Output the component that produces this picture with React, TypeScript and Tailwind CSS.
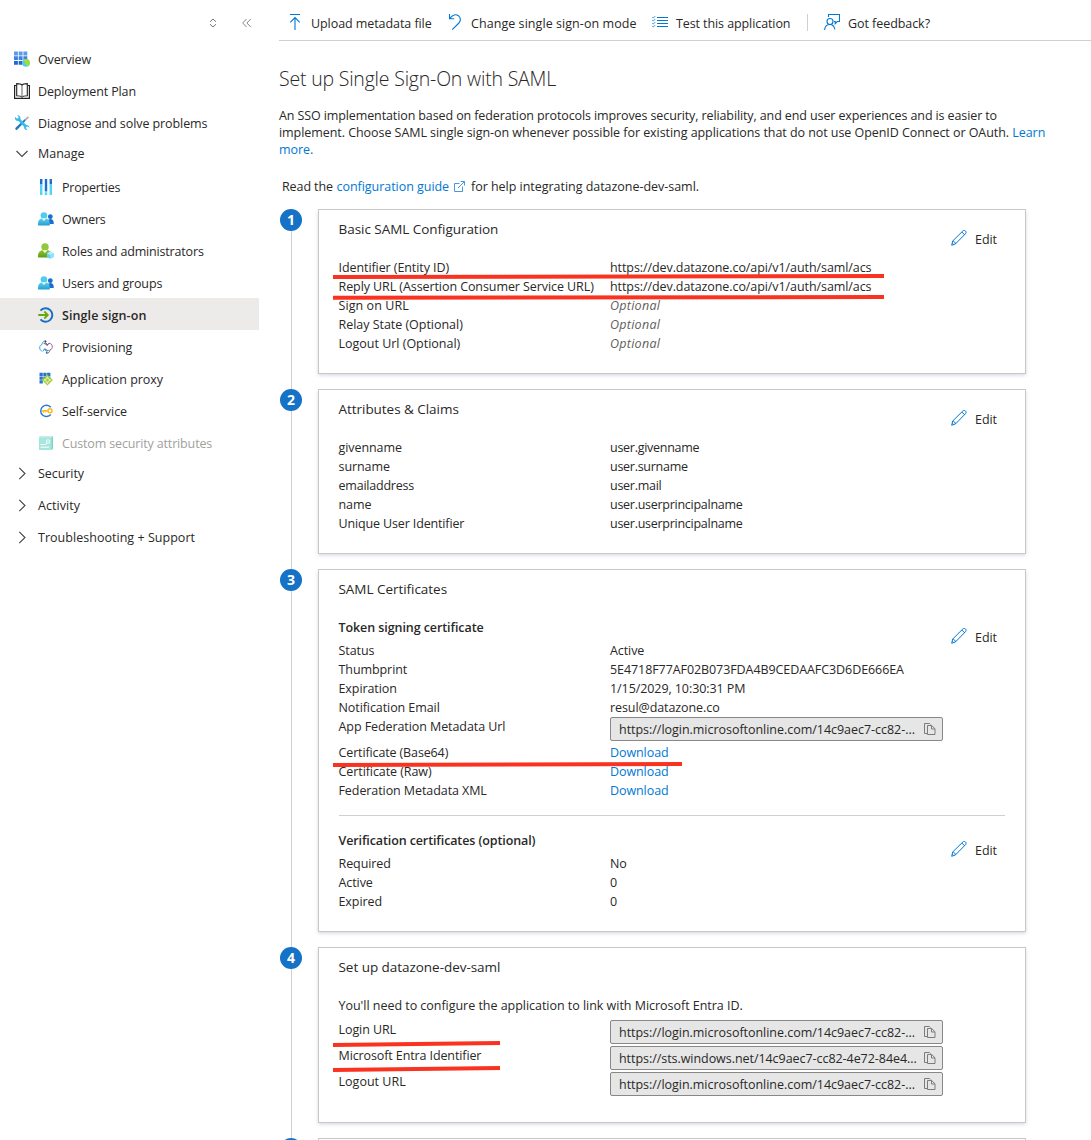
import React, { type ReactNode } from "react";

const BLUE = "#0078d4";

/* ---------- sidebar icons ---------- */

const OverviewIcon = () => (
  <svg width="16" height="16" viewBox="0 0 16 16">
    <defs>
      <linearGradient id="ov" x1="0" y1="0" x2="0" y2="1">
        <stop offset="0" stopColor="#6ba3f2" />
        <stop offset="1" stopColor="#1b5fc9" />
      </linearGradient>
    </defs>
    <g fill="url(#ov)">
      <path d="M0 .5h3.9v3.9H0zM4.7.5h3.9v3.9H4.7zM9.4.5h3.9v3.9H9.4z" fill="#5d99ee" />
      <path d="M0 5.2h3.9v3.9H0zM4.7 5.2h3.9v3.9H4.7zM9.4 5.2h3.9v3.9H9.4z" fill="#3b80e2" />
      <path d="M0 9.9h3.9v3.9H0zM4.7 9.9h3.9v3.9H4.7z" fill="#2468cf" />
    </g>
    <circle cx="12" cy="11.8" r="3.9" fill="#4fcdf0" />
    <path d="M9.2 8.8c2-1.6 6-.8 6.6 2.4.1 2.200-.8 3.600-2.300 4.200-1-.8-.6-1.700-1.500-2.300-1.200-.3-1.300-1.200-.9-2-.8-.6-1.500-1.200-1.900-2.300z" fill="#a6dc2f" />
  </svg>
);

const BookIcon = () => (
  <svg width="16" height="16" viewBox="0 0 16 16" fill="none" stroke="#222">
    <path d="M2.500 2.500H.6v12.800h5.900c.8 0 1 .3 1.500.3s.7-.3 1.500-.3h5.900V2.500h-1.900" strokeWidth="1.200" />
    <path d="M8 2.200C7.300 1 5.500.6 2.700.6v12.200c2.800 0 4.600.3 5.300 1.500.7-1.200 2.500-1.500 5.300-1.500V.6C10.500.6 8.700 1 8 2.200z" strokeWidth="1.100" />
    <path d="M8 2.200v12" stroke="#888" strokeWidth="1.300" />
  </svg>
);

const ToolsIcon = () => (
  <svg width="16" height="16" viewBox="0 0 16 16">
    <path d="M1.600 12.700 10.800 4l1.300 1.300-8.700 9.300c-1.300 1-2.800-.6-1.800-1.900z" fill="#1e78b8" />
    <path d="m10 4.700 3.800-3.400 1.200 1.100-3.500 3.700z" fill="#a4b3bd" />
    <path d="M1 3.800c-.3-1 0-1.500.1-1.900l1.800 1.700 1.400-.3.3-1.500L3 .3C4.900-.1 6.700 1.200 6.400 3.400l-.1.600 6 6c1.700-.4 3.300.9 3.100 2.700l-1.600-1.300-1.500.4-.3 1.500 1.500 1.500c-2 .5-3.700-.9-3.400-3L4.400 6C2.800 6.200 1.500 5.300 1 3.800z" fill="#35bde8" />
  </svg>
);

const ChevronDown = () => (
  <svg width="14" height="14" viewBox="0 0 14 14" fill="none" stroke="#444" strokeWidth="1.100">
    <path d="m1.500 4 5.500 5.500L12.500 4" />
  </svg>
);
const ChevronRight = () => (
  <svg width="14" height="14" viewBox="0 0 14 14" fill="none" stroke="#444" strokeWidth="1.100">
    <path d="m4.300.8 5.700 5.700-5.700 5.700" />
  </svg>
);

const PropertiesIcon = () => (
  <svg width="16" height="16" viewBox="0 0 16 16">
    <path d="M2 0h2.400v5.500H2zM6.800 0h2.400v12.500H6.800zM11.600 0H14v5.500h-2.400z" fill="#1b6fd0" />
    <path d="M2 5.500h2.400V16H2zM6.800 13.300h2.400V16H6.800zM11.600 5.500H14V16h-2.400z" fill="#50d5f5" />
  </svg>
);

const PeopleIcon = () => (
  <svg width="16" height="16" viewBox="0 0 16 16">
    <defs>
      <linearGradient id="pp" x1="0" y1="0" x2="0" y2="1">
        <stop offset="0" stopColor="#5fd3ef" />
        <stop offset="1" stopColor="#219fd2" />
      </linearGradient>
    </defs>
    <circle cx="12.300" cy="5.700" r="2.400" fill="#1b6fd0" />
    <path d="M9.500 12c0-2.500 1-4 2.800-4 2.200 0 3.400 1.600 3.500 4.200 0 .6-.3.900-.9.900H9.500z" fill="#1b6fd0" />
    <circle cx="5.900" cy="4.500" r="3.300" fill="#50cdec" />
    <path d="M0 13.400C0 9.600 1.500 7.400 3.900 7.400l2 1.400 2-1.400c2.500 0 4 2.200 4 6 0 .7-.4 1.100-1 1.100H1c-.6 0-1-.4-1-1.100z" fill="url(#pp)" />
    <path d="M3.900 7.400h4L5.900 10z" fill="#fff" />
  </svg>
);

const AdminIcon = () => (
  <svg width="16" height="16" viewBox="0 0 16 16">
    <defs>
      <linearGradient id="ad" x1="0" y1="0" x2="0" y2="1">
        <stop offset="0" stopColor="#8fc534" />
        <stop offset="1" stopColor="#5d9a13" />
      </linearGradient>
    </defs>
    <circle cx="7" cy="3.900" r="3.700" fill="#92c83b" />
    <path d="M0 13.500C0 9.600 1.800 7.200 4.600 7.200L7 8.900l2.300-1.700c2.900 0 4.700 2.400 4.700 6.300 0 .7-.4 1.100-1 1.100H1c-.6 0-1-.4-1-1.100z" fill="url(#ad)" />
    <path d="M4.600 7.200h4.700L7 10.300z" fill="#f0f8e2" />
    <path d="m12.300 8.500 3.400 1.700v3.900l-3.400 1.700-3.400-1.700v-3.900z" fill="#62d3f2" />
    <path d="m12.300 12 3.400-1.800v3.900l-3.400 1.700z" fill="#93e2f7" />
    <path d="m12.300 8.500 3.400 1.700-3.400 1.800-3.400-1.800z" fill="#b7edfa" />
  </svg>
);

const SignOnIcon = () => (
  <svg width="16" height="16" viewBox="0 0 16 16" fill="none">
    <path d="M2.500 3.700A6.700 6.700 0 1 1 2.500 12.300" stroke="#1b6fc8" strokeWidth="2" />
    <path d="M.3 8h9.400M6.300 4.500 9.800 8l-3.500 3.500" stroke="#66a80f" strokeWidth="1.800" />
  </svg>
);

const ProvisioningIcon = () => (
  <svg width="14" height="14" viewBox="0 0 14 14" fill="none" strokeWidth=".95">
    <path d="M3.500 11.300C-.2 10.700-.2 5 3 4.600 3.200 2.400 4.500 1 6.500.8" stroke="#3ba2dc" />
    <path d="M10 3.200c4 .2 4.300 6 1 6.700-.2 2-1.500 3.400-3.500 3.500" stroke="#7f58a8" />
    <path d="M5 3.500C6.500 2.900 8 3.300 8.500 5M9.800 3.200 8.500 5.300 6.500 4.500" stroke="#5a3b83" />
    <path d="M9.200 10.500c-1.500.7-3.200.2-3.700-1.300M4.300 11 5.500 8.800l2.200.8" stroke="#2f7fd0" />
    <circle cx="6.500" cy="1.500" r=".9" fill="#3b2360" />
    <circle cx="7.700" cy="12.500" r=".9" fill="#2472c8" />
    <circle cx="5.400" cy="3.500" r=".8" fill="#55a630" />
    <circle cx="9" cy="10.500" r=".8" fill="#55a630" />
  </svg>
);

const ProxyIcon = () => (
  <svg width="14" height="14" viewBox="0 0 14 14">
    <path d="M.5.700h3.300V4H.5zM4.300.700h3.300V4H4.300zM8.100.700h3.300V4H8.100zM.5 4.500h3.300v3.300H.5zM4.300 4.500h3.300v3.300H4.300zM8.100 4.500h3.300v3.300H8.100zM.5 8.300h3.300v3.300H.5z" fill="#2a76c6" />
    <path d="m8.400 2.800 5.400 5.300-5.400 5.400L3 8.100z" fill="#a2cf38" />
    <path d="m8.400 4.700.9 2.400 2.500 1-2.500 1-.9 2.500-1-2.500-2.400-1 2.400-1z" fill="none" stroke="#f2fad9" strokeWidth=".8" />
  </svg>
);

const SelfServiceIcon = () => (
  <svg width="14" height="14" viewBox="0 0 14 14" fill="none">
    <path d="M11.800 3.200A5.700 5.700 0 1 0 11.800 10.600" stroke="#2a7cd0" strokeWidth="1.500" />
    <circle cx="11" cy="6.800" r="2" stroke="#fbbc1c" strokeWidth="1.500" />
    <path d="M9 6.800H3.200M4.500 7v1.700M6.500 7v1.200" stroke="#fbbc1c" strokeWidth="1.400" />
  </svg>
);

const AttributesIcon = () => (
  <svg width="14" height="14" viewBox="0 0 14 14">
    <path d="M0 1.500 1.200 0H14v12.500L12.500 14H0z" fill="#a5e6dd" />
    <path d="M12.600 1.500 14 0v12.500L12.600 14z" fill="#84cfc8" />
    <path d="M0 1.500h12.600L14 0H1.200z" fill="#c0efe8" />
    <circle cx="9" cy="5.500" r="1.700" fill="none" stroke="#fff" strokeWidth="1" />
    <path d="M1.500 8.500h5M1.500 11.200h8.500M7.800 7 6.800 8.500" stroke="#fff" strokeWidth="1" />
  </svg>
);

/* ---------- command bar and content icons ---------- */

const UploadIcon = () => (
  <svg width="16" height="16" viewBox="0 0 16 16" fill="none" stroke={BLUE}>
    <path d="M3 .5h10" />
    <path d="M8 16V3.800M3.300 8.300 8 3.600l4.700 4.700" strokeWidth="1.100" />
  </svg>
);
const UndoIcon = () => (
  <svg width="16" height="16" viewBox="0 0 16 16" fill="none" stroke={BLUE} strokeWidth="1.100">
    <path d="M2.500 0v4.700h4.700M2.700 4.500C5.500.7 9-.2 11.400 1.700c2.600 2.200 2.500 5.200.5 7.300L5.200 15.600" />
  </svg>
);
const ListIcon = () => (
  <svg width="16" height="16" viewBox="0 0 16 16" fill="none" stroke={BLUE}>
    <path d="M5 3.500h11M5 6.500h11M5 9.500h11M5 12.500h11" />
    <path d="m.3 3.300.9.800 2-2M.3 6.300l.9.800 2-2M.3 9.300l.9.800 2-2M.3 12.300l.9.800 2-2" strokeWidth=".8" />
  </svg>
);
const FeedbackIcon = () => (
  <svg width="16" height="16" viewBox="0 0 16 16" fill="none" stroke={BLUE} strokeWidth="1.100">
    <path d="M4.500 3V.5h11v7h-2.200l-2.100 2.200V7.500H10" />
    <circle cx="6" cy="7.500" r="3" />
    <path d="M.6 16c.2-3.500 2.300-5.500 5.400-5.500s4.200 2 4.900 5" />
  </svg>
);
const PencilIcon = () => (
  <svg width="16" height="16" viewBox="0 0 16 16" fill="none" stroke={BLUE} strokeWidth="1">
    <path d="m.7 15.300 1-4.300L11.800 1c.8-.8 2-.7 2.700 0 .8.700.8 1.900 0 2.700L4.500 13.900.7 15.300z" />
    <path d="m10.800 2 2.800 2.800M1.700 11c1.400.2 2.500 1.300 2.800 2.900M1.300 13.200l1.300 1.200" />
  </svg>
);
const CopyIcon = () => (
  <svg width="12" height="14" viewBox="0 0 12 14" fill="none" stroke="#7c7c7c" strokeWidth="1">
    <path d="M3.500 11.500h-3v-10h5l1 1" />
    <path d="M3.500 3.500h4.200l3.300 3.300v5.700H3.500zM7.500 3.700V7H11" />
  </svg>
);
const ExternalIcon = () => (
  <svg width="11" height="11" viewBox="0 0 11 11" fill="none" stroke="#4b97dc" strokeWidth="1">
    <path d="M5.500 2.500h-5v8h8v-5M6.500.5h4v4M10.500.5 4 7" />
  </svg>
);

/* ---------- sidebar ---------- */

type Item = { icon: () => ReactNode; label: string; kind: "top" | "group" | "child"; cls?: string; active?: boolean; off?: boolean };

const items: Item[] = [
  { icon: OverviewIcon, label: "Overview", kind: "top", cls: "tracking-[-0.15px]" },
  { icon: BookIcon, label: "Deployment Plan", kind: "top", cls: "tracking-[-0.13px]" },
  { icon: ToolsIcon, label: "Diagnose and solve problems", kind: "top", cls: "tracking-[-0.08px]" },
  { icon: ChevronDown, label: "Manage", kind: "group", cls: "tracking-[-0.02px]" },
  { icon: PropertiesIcon, label: "Properties", kind: "child", cls: "tracking-[-0.22px]" },
  { icon: PeopleIcon, label: "Owners", kind: "child", cls: "tracking-[-0.3px]" },
  { icon: AdminIcon, label: "Roles and administrators", kind: "child", cls: "tracking-[-0.17px]" },
  { icon: PeopleIcon, label: "Users and groups", kind: "child", cls: "tracking-[-0.15px]" },
  { icon: SignOnIcon, label: "Single sign-on", kind: "child", cls: "font-semibold tracking-[0.09px]", active: true },
  { icon: ProvisioningIcon, label: "Provisioning", kind: "child", cls: "tracking-[-0.1px]" },
  { icon: ProxyIcon, label: "Application proxy", kind: "child", cls: "tracking-[-0.03px]" },
  { icon: SelfServiceIcon, label: "Self-service", kind: "child", cls: "tracking-[-0.06px]" },
  { icon: AttributesIcon, label: "Custom security attributes", kind: "child", cls: "tracking-[-0.15px]", off: true },
  { icon: ChevronRight, label: "Security", kind: "group", cls: "tracking-[-0.06px]" },
  { icon: ChevronRight, label: "Activity", kind: "group", cls: "tracking-[0.05px]" },
  { icon: ChevronRight, label: "Troubleshooting + Support", kind: "group", cls: "tracking-[0.03px]" },
];

function Sidebar() {
  return (
    <nav className="w-[279px] shrink-0">
      <div className="flex h-[42px] items-center gap-[24px] pt-[4px] pl-[209px]">
        <svg width="8" height="10" viewBox="0 0 8 10" fill="none" stroke="#777" strokeWidth="1">
          <path d="M1 3.800 4 1l3 2.800M1 6.200 4 9l3-2.800" />
        </svg>
        <svg width="12" height="10" viewBox="0 0 12 10" fill="none" stroke="#888" strokeWidth="1">
          <path d="M5.500 1 1.700 5l3.800 4M9.700 1 5.900 5l3.800 4" />
        </svg>
      </div>
      <ul>
        {items.map(({ icon: Icon, label, kind, cls, active, off }) => (
          <li
            key={label}
            className={`flex h-8 w-[259px] items-center ${kind === "child" ? "pl-[38px]" : "pl-[14px]"} ${active ? "bg-[#edebe9]" : ""}`}
          >
            <span className={`flex w-6 items-center ${kind === "group" ? "" : "pt-[2px]"}`}>
              <span className="flex w-4 justify-center">
                <Icon />
              </span>
            </span>
            <span
              className={`${kind === "group" ? "pb-px" : "pt-[2px]"} ${off ? "text-[#a19f9d]" : "text-[#292827]"} ${cls ?? ""}`}
            >
              {label}
            </span>
          </li>
        ))}
      </ul>
    </nav>
  );
}

/* ---------- main ---------- */

function Command({ icon, label, cls }: { icon: ReactNode; label: string; cls: string }) {
  return (
    <div className="flex items-center">
      <span className="w-6">{icon}</span>
      <span className={`pt-[3px] ${cls}`}>{label}</span>
    </div>
  );
}

const Edit = () => (
  <button className="mr-[28px] flex h-[18px] shrink-0 gap-2">
    <PencilIcon />
    <span className="pt-px leading-[18px]">Edit</span>
  </button>
);

function CopyBox({ text, cls }: { text: string; cls?: string }) {
  return (
    <div className="flex h-6 w-[333px] items-center justify-between rounded-[2px] border border-[#8a8886] bg-[#e6e6e6] pr-[6px] pl-2">
      <span className={`pt-px leading-[18px] ${cls ?? "tracking-[-0.03px]"}`}>{text}</span>
      <CopyIcon />
    </div>
  );
}

function Row({ label, children, cls }: { label: string; children: ReactNode; cls?: string }) {
  return (
    <div className="flex">
      <div className={`w-[271.500px] shrink-0 leading-[19px] ${cls ?? ""}`}>{label}</div>
      <div className="leading-[19px] whitespace-nowrap">{children}</div>
    </div>
  );
}

const Optional = () => <span className="tracking-[0.28px] text-[#605e5c] italic">Optional</span>;
const Claim = ({ children }: { children: ReactNode }) => <span className="tracking-[-0.27px]">{children}</span>;
const Download = () => <a className="text-[#0078d4]">Download</a>;

function Step({ n, height, children }: { n?: number; height: string; children?: ReactNode }) {
  return (
    <section className="flex">
      <div className="flex w-[39px] shrink-0 flex-col items-start pl-px">
        <span className="flex size-[22px] shrink-0 items-center justify-center rounded-full bg-[#1572c6] text-[14px] leading-none font-bold text-white">
          {n}
        </span>
        <span className="ml-[11px] w-px grow bg-[#d2d0ce]" />
      </div>
      <div className="pb-[15px]">
        <div
          className={`w-[708px] border border-[#c8c8c8] bg-white pl-[19.500px] shadow-[0_1.600px_3.600px_rgba(40,70,110,0.200)] ${height}`}
        >
          {children}
        </div>
      </div>
    </section>
  );
}

const CardTitle = ({ children }: { children: ReactNode }) => (
  <h2 className="pt-[9px] text-[13.500px] leading-5 tracking-[-0.04px]">{children}</h2>
);

function RedLines() {
  return (
    <svg className="pointer-events-none absolute top-0 left-0" width="1091" height="1140" stroke="#fa3320" strokeWidth="4">
      <path d="M333 277 884 276M333 297.800 884 297M333 765 682 764M333 1045 500 1043M333 1070 500 1068" />
    </svg>
  );
}

export default function App() {
  return (
    <div className="relative flex h-[1140px] w-[1091px] overflow-hidden bg-white font-['Open_Sans','Noto_Sans',sans-serif] text-[12.500px] leading-[17px] tracking-[-0.08px] text-[#292827]">
      <Sidebar />
      <main className="min-w-0 grow">
        <header className="flex h-[41px] items-center border-b border-[#d2d0ce] pt-[4px] pl-2">
          <Command icon={<UploadIcon />} label="Upload metadata file" cls="w-[136px] tracking-[-0.07px]" />
          <Command icon={<UndoIcon />} label="Change single sign-on mode" cls="w-[181px] tracking-[0.06px]" />
          <Command icon={<ListIcon />} label="Test this application" cls="w-[131px] tracking-[-0.09px]" />
          <span className="mr-4 h-[17px] w-px bg-[#d2d0ce]" />
          <Command icon={<FeedbackIcon />} label="Got feedback?" cls="tracking-[-0.06px]" />
        </header>

        <h1 className="pt-[24px] text-[19.500px] leading-7 font-light tracking-[-0.2px]">Set up Single Sign-On with SAML</h1>

        <div className="mt-[14px] whitespace-nowrap">
          <p className="tracking-[-0.11px]">
            An SSO implementation based on federation protocols improves security, reliability, and end user experiences and is easier to
          </p>
          <p className="tracking-[-0.055px]">
            implement. Choose SAML single sign-on whenever possible for existing applications that do not use OpenID Connect or OAuth.{" "}
            <a className="text-[#0078d4]">Learn</a>
          </p>
          <p>
            <a className="text-[#0078d4]">more.</a>
          </p>
        </div>

        <p className="mt-5 flex items-center pl-[3px] whitespace-nowrap">
          <span className="w-[54.500px] tracking-[-0.1px]">Read the</span>
          <a className="flex w-[134.500px] items-center gap-[5px] text-[#0078d4]">
            <span className="tracking-[-0.04px]">configuration guide</span>
            <ExternalIcon />
          </a>
          <span className="tracking-[-0.03px]">for help integrating datazone-dev-saml.</span>
        </p>

        <div className="mt-[14px]">
          <Step n={1} height="h-[165px]">
            <div className="flex justify-between">
              <div>
                <CardTitle>Basic SAML Configuration</CardTitle>
                <div className="mt-[19px]">
                  <Row label="Identifier (Entity ID)">https://dev.datazone.co/api/v1/auth/saml/acs</Row>
                  <Row label="Reply URL (Assertion Consumer Service URL)">https://dev.datazone.co/api/v1/auth/saml/acs</Row>
                  <Row label="Sign on URL" cls="tracking-[0.08px]"><Optional /></Row>
                  <Row label="Relay State (Optional)" cls="tracking-[-0.03px]"><Optional /></Row>
                  <Row label="Logout Url (Optional)" cls="tracking-[-0.01px]"><Optional /></Row>
                </div>
              </div>
              <div className="pt-5"><Edit /></div>
            </div>
          </Step>

          <Step n={2} height="h-[165px]">
            <div className="flex justify-between">
              <div>
                <CardTitle>Attributes &amp; Claims</CardTitle>
                <div className="mt-[19px]">
                  <Row label="givenname"><Claim>user.givenname</Claim></Row>
                  <Row label="surname"><Claim>user.surname</Claim></Row>
                  <Row label="emailaddress" cls="tracking-[-0.22px]"><Claim>user.mail</Claim></Row>
                  <Row label="name"><Claim>user.userprincipalname</Claim></Row>
                  <Row label="Unique User Identifier" cls="tracking-[-0.14px]"><Claim>user.userprincipalname</Claim></Row>
                </div>
              </div>
              <div className="pt-5"><Edit /></div>
            </div>
          </Step>

          <Step n={3} height="h-[363px]">
            <CardTitle>SAML Certificates</CardTitle>
            <div className="mt-[19px] flex justify-between">
              <div>
                <h3 className="mb-1 leading-[19px] font-semibold">Token signing certificate</h3>
                <Row label="Status">Active</Row>
                <Row label="Thumbprint">5E4718F77AF02B073FDA4B9CEDAAFC3D6DE666EA</Row>
                <Row label="Expiration">1/15/2029, 10:30:31 PM</Row>
                <Row label="Notification Email">resul@datazone.co</Row>
                <Row label="App Federation Metadata Url">
                  <div className="h-[26px]"><CopyBox text="https://login.microsoftonline.com/14c9aec7-cc82-..." /></div>
                </Row>
                <Row label="Certificate (Base64)" cls="tracking-[-0.13px]"><Download /></Row>
                <Row label="Certificate (Raw)"><Download /></Row>
                <Row label="Federation Metadata XML"><Download /></Row>
              </div>
              <div className="pt-[10px]"><Edit /></div>
            </div>
            <hr className="mt-[15px] mr-5 border-[#d2d0ce]" />
            <div className="mt-[15px] flex justify-between">
              <div>
                <h3 className="mb-1 leading-[19px] font-semibold tracking-[-0.11px]">Verification certificates (optional)</h3>
                <Row label="Required">No</Row>
                <Row label="Active">0</Row>
                <Row label="Expired">0</Row>
              </div>
              <div className="pt-[10px]"><Edit /></div>
            </div>
          </Step>

          <Step n={4} height="h-[176px]">
            <CardTitle>Set up datazone-dev-saml</CardTitle>
            <p className="mt-[19px] mb-[5px] leading-[19px] tracking-[-0.03px]">
              You'll need to configure the application to link with Microsoft Entra ID.
            </p>
            <div className="flex flex-col gap-[2px]">
              <Row label="Login URL"><CopyBox text="https://login.microsoftonline.com/14c9aec7-cc82-..." /></Row>
              <Row label="Microsoft Entra Identifier" cls="tracking-[-0.11px]">
                <CopyBox text="https://sts.windows.net/14c9aec7-cc82-4e72-84e4..." cls="tracking-[-0.05px]" />
              </Row>
              <Row label="Logout URL" cls="tracking-[0.02px]"><CopyBox text="https://login.microsoftonline.com/14c9aec7-cc82-..." /></Row>
            </div>
          </Step>

          <Step height="h-[165px]" />
        </div>
      </main>
      <RedLines />
    </div>
  );
}
